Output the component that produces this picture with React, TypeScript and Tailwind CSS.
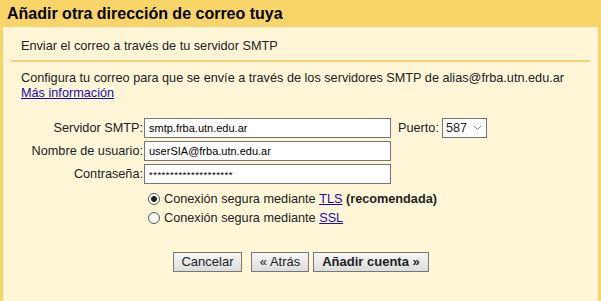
import { useState } from "react";

export default function App() {
  const [secure, setSecure] = useState("tls");

  const inputCls =
    "w-[247px] h-[20px] border border-[#767676] bg-white px-[4px] text-[11px] text-black outline-none";
  const btnCls =
    "h-[20px] border border-[#777] bg-gradient-to-b from-[#f6f6f6] to-[#dcdcdc] text-[13px] text-[#222] flex items-center justify-center";
  const radioCls =
    "appearance-none w-[12px] h-[12px] m-0 mr-[4px] rounded-full border border-[#555] bg-white checked:bg-[radial-gradient(circle,#222_0_2.6px,#fff_3.2px)]";

  return (
    <div className="w-[601px] h-[301px] bg-[#fff6d8] font-['Arial','Liberation_Sans',sans-serif] text-[12.7px] text-[#222] flex flex-col overflow-hidden">
      {/* Header */}
      <div className="h-[27px] bg-[#f9d468] px-[7px] flex items-center shrink-0">
        <h1 className="text-[16px] font-bold text-black leading-none">
          Añadir otra dirección de correo tuya
        </h1>
      </div>

      {/* Body */}
      <div className="flex-1 border-l-[3px] border-r-[3px] border-[#f9d468] flex flex-col">
        <div className="mx-[8px] pl-[10px] pt-[10px] pb-[4px] border-b-[2px] border-[#f0d37c]">
          Enviar el correo a través de tu servidor SMTP
        </div>

        <div className="pl-[18px] pt-[9px] leading-[15px]">
          Configura tu correo para que se envíe a través de los servidores SMTP de alias@frba.utn.edu.ar
          <br />
          <a href="#" className="text-[#1a0dab] underline">
            Más información
          </a>
        </div>

        {/* Form */}
        <div className="mt-[17px] flex flex-col gap-[3px]">
          <div className="flex items-center h-[20px]">
            <label className="w-[141px] text-right pr-[1px]">Servidor SMTP:</label>
            <input defaultValue="smtp.frba.utn.edu.ar" className={inputCls} />
            <label className="ml-[7px] mr-[3px]">Puerto:</label>
            <div className="w-[45px] h-[20px] border border-[#767676] bg-white flex items-center justify-between pl-[3px] pr-[4px]">
              <span>587</span>
              <svg width="9" height="6" viewBox="0 0 9 6" fill="none">
                <path d="M1 1l3.5 3.5L8 1" stroke="#888" strokeWidth="1" />
              </svg>
            </div>
          </div>
          <div className="flex items-center h-[20px]">
            <label className="w-[141px] text-right pr-[1px]">Nombre de usuario:</label>
            <input defaultValue="userSIA@frba.utn.edu.ar" className={inputCls} />
          </div>
          <div className="flex items-center h-[20px]">
            <label className="w-[141px] text-right pr-[1px]">Contraseña:</label>
            <input
              defaultValue="********************"
              className="w-[247px] h-[20px] border border-[#767676] bg-white px-[4px] text-[9.5px] tracking-[0.5px] text-black outline-none"
            />
          </div>
        </div>

        {/* Radios */}
        <div className="mt-[7px] pl-[145px] flex flex-col gap-[3px]">
          <label className="flex items-center h-[16px]">
            <input
              type="radio"
              name="sec"
              checked={secure === "tls"}
              onChange={() => setSecure("tls")}
              className={radioCls}
            />
            Conexión segura mediante&nbsp;
            <a href="#" className="text-[#1a0dab] underline">TLS</a>
            &nbsp;<b>(recomendada)</b>
          </label>
          <label className="flex items-center h-[16px]">
            <input
              type="radio"
              name="sec"
              checked={secure === "ssl"}
              onChange={() => setSecure("ssl")}
              className={radioCls}
            />
            Conexión segura mediante&nbsp;
            <a href="#" className="text-[#1a0dab] underline">SSL</a>
          </label>
        </div>

        {/* Buttons */}
        <div className="mt-[26px] pl-[170px] flex items-center">
          <button className={`${btnCls} w-[69px]`}>Cancelar</button>
          <button className={`${btnCls} w-[58px] ml-[9px]`}>« Atrás</button>
          <button className={`${btnCls} w-[116px] ml-[4px] font-bold`}>Añadir cuenta »</button>
        </div>
      </div>
    </div>
  );
}
